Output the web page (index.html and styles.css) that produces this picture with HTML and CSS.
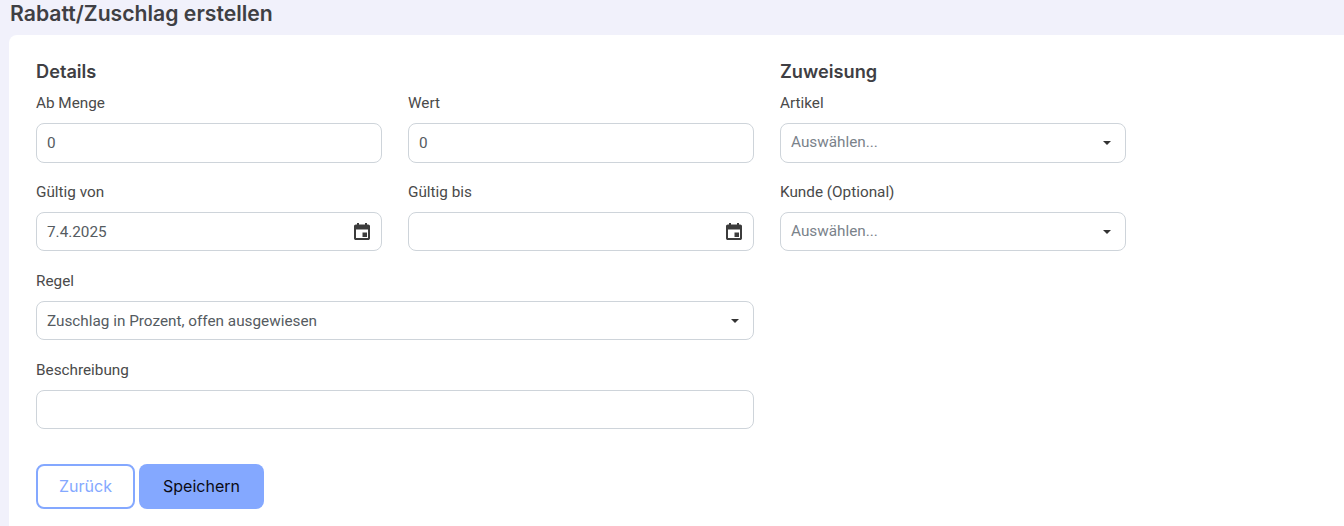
FILE: index.html
```html
<!DOCTYPE html>
<html lang="de">
<head>
  <meta charset="UTF-8" />
  <meta name="viewport" content="width=device-width, initial-scale=1.0" />
  <title>Rabatt/Zuschlag erstellen</title>
  <link rel="stylesheet" href="styles.css">
</head>
<body>
  <h1 class="page-title">Rabatt/Zuschlag erstellen</h1>
  <main class="card">
    <form class="form-grid">
      <section class="details">
        <h2>Details</h2>
        <div class="field-row">
          <div class="field">
            <label>Ab Menge</label>
            <div class="box box-tall"><span class="value">0</span></div>
          </div>
          <div class="field">
            <label>Wert</label>
            <div class="box box-tall"><span class="value">0</span></div>
          </div>
        </div>
        <div class="field-row">
          <div class="field">
            <label>Gültig von</label>
            <div class="box">
              <span class="value">7.4.2025</span>
              <svg class="calendar" viewBox="0 0 16 17"><path fill-rule="evenodd" d="M3 0h2v1.5h6V0h2v1.5h1.2c1 0 1.8.8 1.8 1.8v11.9c0 1-.8 1.8-1.8 1.8H1.8c-1 0-1.8-.8-1.8-1.8V3.3c0-1 .8-1.8 1.8-1.8H3zM2 6.5V15h12V6.5zM8.5 9.5H13V14H8.5z"/></svg>
            </div>
          </div>
          <div class="field">
            <label>Gültig bis</label>
            <div class="box">
              <span class="value"></span>
              <svg class="calendar" viewBox="0 0 16 17"><path fill-rule="evenodd" d="M3 0h2v1.5h6V0h2v1.5h1.2c1 0 1.8.8 1.8 1.8v11.9c0 1-.8 1.8-1.8 1.8H1.8c-1 0-1.8-.8-1.8-1.8V3.3c0-1 .8-1.8 1.8-1.8H3zM2 6.5V15h12V6.5zM8.5 9.5H13V14H8.5z"/></svg>
            </div>
          </div>
        </div>
        <div class="field">
          <label>Regel</label>
          <div class="box">
            <span class="value">Zuschlag in Prozent, offen ausgewiesen</span>
            <span class="caret"></span>
          </div>
        </div>
        <div class="field">
          <label>Beschreibung</label>
          <div class="box"><span class="value"></span></div>
        </div>
      </section>

      <section class="assign">
        <h2>Zuweisung</h2>
        <div class="field">
          <label>Artikel</label>
          <div class="box box-tall">
            <span class="placeholder">Auswählen...</span>
            <span class="caret"></span>
          </div>
        </div>
        <div class="field">
          <label>Kunde (Optional)</label>
          <div class="box">
            <span class="placeholder">Auswählen...</span>
            <span class="caret"></span>
          </div>
        </div>
      </section>
    </form>

    <div class="actions">
      <button type="button" class="btn btn-outline">Zurück</button>
      <button type="button" class="btn btn-primary">Speichern</button>
    </div>
  </main>
</body>
</html>
```

FILE: styles.css
```css
* {
  box-sizing: border-box;
}

html,
body {
  height: 526px;
  overflow: hidden;
}

body {
  margin: 0;
  background: #f1f1fb;
  font-family: Roboto, Arial, sans-serif;
  color: #444;
}

.page-title {
  margin: 0;
  height: 35px;
  padding-left: 10px;
  font-family: Inter, Arial, sans-serif;
  font-size: 21.2px;
  font-weight: 600;
  line-height: 26px;
  color: #3f3f44;
}

.card {
  margin-left: 9px;
  height: 491px;
  padding: 26px 27px 0;
  background: #fff;
  border-radius: 8px 0 0 0;
}

.form-grid {
  display: grid;
  grid-template-columns: 718px 346px;
  column-gap: 26px;
}

h2 {
  margin: 0 0 13px;
  font-family: Inter, Arial, sans-serif;
  font-size: 18.2px;
  font-weight: 600;
  line-height: 21px;
  color: #3f3f44;
}

.field-row {
  display: grid;
  grid-template-columns: 346px 346px;
  column-gap: 26px;
}

.field {
  margin-bottom: 22px;
}

label {
  display: block;
  height: 29px;
  margin-bottom: -1px;
  font-size: 15.3px;
  line-height: 17px;
  color: #4a4a4a;
}

.box {
  display: flex;
  align-items: center;
  justify-content: space-between;
  height: 39px;
  padding: 0 10px;
  border: 1px solid #ced4da;
  border-radius: 8px;
  font-size: 15.3px;
  background: #fff;
}

.box-tall {
  height: 40px;
  margin-bottom: -1px;
}

.value {
  color: #555b61;
}

.placeholder {
  padding-bottom: 2px;
  color: #7a828a;
}

.calendar {
  width: 16px;
  height: 17px;
  margin-right: 1px;
  margin-bottom: 1px;
  fill: #3c3c3c;
}

.caret {
  width: 0;
  height: 0;
  margin-right: 4px;
  border-left: 4.5px solid transparent;
  border-right: 4.5px solid transparent;
  border-top: 4.5px solid #333;
}

.actions {
  display: flex;
  gap: 4px;
  margin-top: 13px;
}

.btn {
  height: 45px;
  border-radius: 8px;
  font-family: Inter, Arial, sans-serif;
  font-size: 16px;
  font-weight: 400;
  padding: 0 0 2px;
}

.btn-outline {
  width: 99px;
  background: #fff;
  border: 2px solid #84a8ff;
  color: #84a8ff;
}

.btn-primary {
  width: 125px;
  background: #84a8ff;
  border: 0;
  color: #0b0b14;
}
```
